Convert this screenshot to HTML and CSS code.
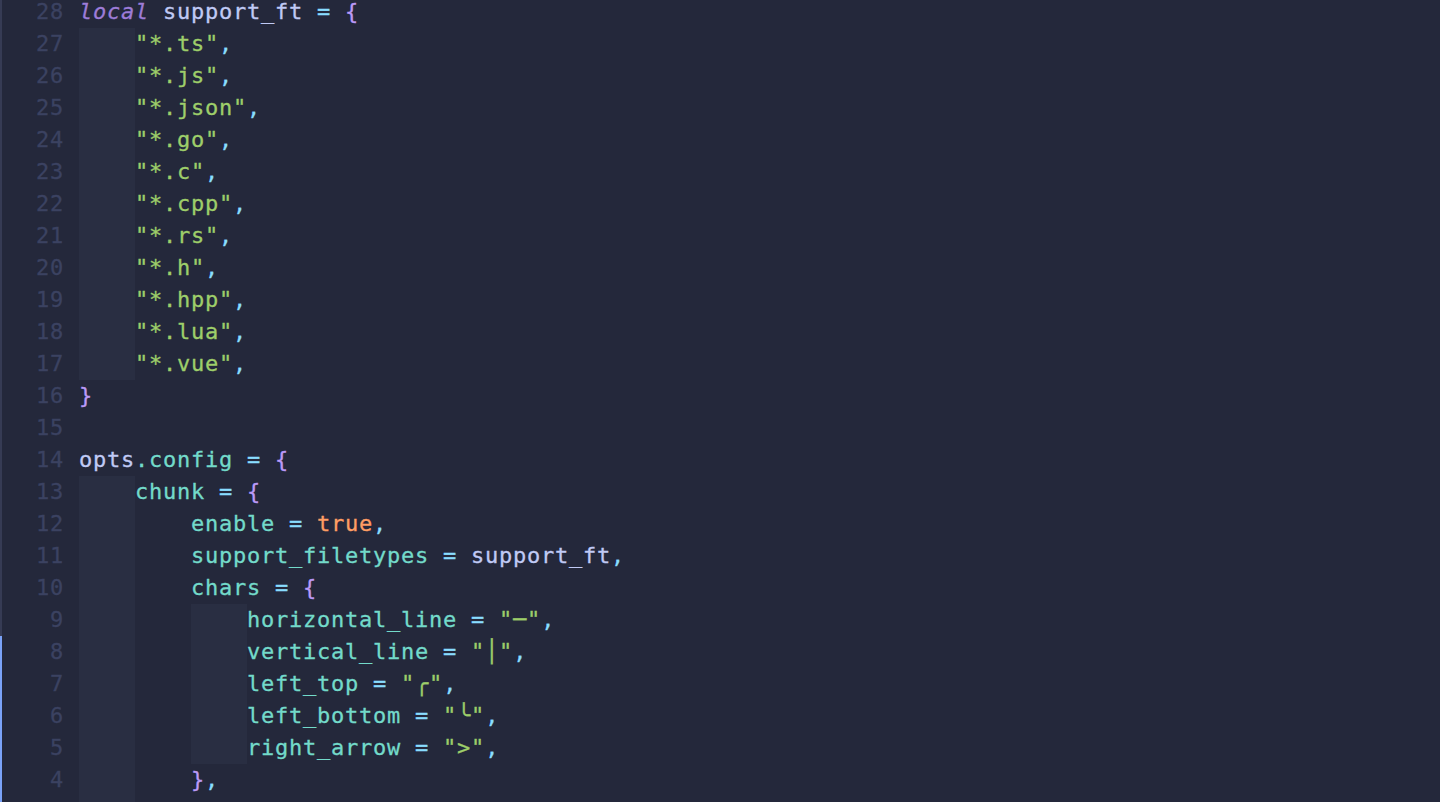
FILE: index.html
```html
<!DOCTYPE html>
<html lang="en">
<head>
<meta charset="utf-8">
<title>support_ft.lua</title>
<link rel="stylesheet" href="styles.css">
</head>
<body>
<div class="window">
  <div class="edge"></div>
  <div class="editor">
    <div class="row"><span class="ln">28</span><span class="code"><span class="kw">local</span> <span class="var">support_ft</span> <span class="op">=</span> <span class="br">{</span></span></div>
    <div class="row"><span class="ln">27</span><span class="code"><span class="ind g">    </span><span class="str">"*.ts"</span><span class="pun">,</span></span></div>
    <div class="row"><span class="ln">26</span><span class="code"><span class="ind g">    </span><span class="str">"*.js"</span><span class="pun">,</span></span></div>
    <div class="row"><span class="ln">25</span><span class="code"><span class="ind g">    </span><span class="str">"*.json"</span><span class="pun">,</span></span></div>
    <div class="row"><span class="ln">24</span><span class="code"><span class="ind g">    </span><span class="str">"*.go"</span><span class="pun">,</span></span></div>
    <div class="row"><span class="ln">23</span><span class="code"><span class="ind g">    </span><span class="str">"*.c"</span><span class="pun">,</span></span></div>
    <div class="row"><span class="ln">22</span><span class="code"><span class="ind g">    </span><span class="str">"*.cpp"</span><span class="pun">,</span></span></div>
    <div class="row"><span class="ln">21</span><span class="code"><span class="ind g">    </span><span class="str">"*.rs"</span><span class="pun">,</span></span></div>
    <div class="row"><span class="ln">20</span><span class="code"><span class="ind g">    </span><span class="str">"*.h"</span><span class="pun">,</span></span></div>
    <div class="row"><span class="ln">19</span><span class="code"><span class="ind g">    </span><span class="str">"*.hpp"</span><span class="pun">,</span></span></div>
    <div class="row"><span class="ln">18</span><span class="code"><span class="ind g">    </span><span class="str">"*.lua"</span><span class="pun">,</span></span></div>
    <div class="row"><span class="ln">17</span><span class="code"><span class="ind g">    </span><span class="str">"*.vue"</span><span class="pun">,</span></span></div>
    <div class="row"><span class="ln">16</span><span class="code"><span class="br">}</span></span></div>
    <div class="row"><span class="ln">15</span><span class="code"></span></div>
    <div class="row"><span class="ln">14</span><span class="code"><span class="var">opts</span><span class="key">.config</span> <span class="op">=</span> <span class="br">{</span></span></div>
    <div class="row"><span class="ln">13</span><span class="code"><span class="ind g">    </span><span class="key">chunk</span> <span class="op">=</span> <span class="br">{</span></span></div>
    <div class="row"><span class="ln">12</span><span class="code"><span class="ind g">    </span><span class="ind">    </span><span class="key">enable</span> <span class="op">=</span> <span class="bool">true</span><span class="pun">,</span></span></div>
    <div class="row"><span class="ln">11</span><span class="code"><span class="ind g">    </span><span class="ind">    </span><span class="key">support_filetypes</span> <span class="op">=</span> <span class="var">support_ft</span><span class="pun">,</span></span></div>
    <div class="row"><span class="ln">10</span><span class="code"><span class="ind g">    </span><span class="ind">    </span><span class="key">chars</span> <span class="op">=</span> <span class="br">{</span></span></div>
    <div class="row"><span class="ln">9</span><span class="code"><span class="ind g">    </span><span class="ind">    </span><span class="ind g">    </span><span class="key">horizontal_line</span> <span class="op">=</span> <span class="str">"─"</span><span class="pun">,</span></span></div>
    <div class="row"><span class="ln">8</span><span class="code"><span class="ind g">    </span><span class="ind">    </span><span class="ind g">    </span><span class="key">vertical_line</span> <span class="op">=</span> <span class="str">"│"</span><span class="pun">,</span></span></div>
    <div class="row"><span class="ln">7</span><span class="code"><span class="ind g">    </span><span class="ind">    </span><span class="ind g">    </span><span class="key">left_top</span> <span class="op">=</span> <span class="str">"╭"</span><span class="pun">,</span></span></div>
    <div class="row"><span class="ln">6</span><span class="code"><span class="ind g">    </span><span class="ind">    </span><span class="ind g">    </span><span class="key">left_bottom</span> <span class="op">=</span> <span class="str">"╰"</span><span class="pun">,</span></span></div>
    <div class="row"><span class="ln">5</span><span class="code"><span class="ind g">    </span><span class="ind">    </span><span class="ind g">    </span><span class="key">right_arrow</span> <span class="op">=</span> <span class="str">"&gt;"</span><span class="pun">,</span></span></div>
    <div class="row"><span class="ln">4</span><span class="code"><span class="ind g">    </span><span class="ind">    </span><span class="br">}</span><span class="pun">,</span></span></div>
    <div class="row"><span class="ln">3</span><span class="code"><span class="ind g">    </span><span class="ind">    </span><span class="key">style</span> <span class="op">=</span> <span class="br">{</span></span></div>
  </div>
</div>
</body>
</html>
```

FILE: styles.css
```css
html, body {
  margin: 0;
  padding: 0;
  height: 100%;
  overflow: hidden;
  background: #24283b;
}

.window {
  display: flex;
  height: 802px;
  background: #24283b;
}

.edge {
  width: 2px;
  flex: 0 0 2px;
  background: linear-gradient(to bottom, #363b54 0, #363b54 636px, #7aa2f7 636px, #7aa2f7 100%);
}

.editor {
  flex: 1;
  margin-top: -4px;
  font-family: "DejaVu Sans Mono", "Liberation Mono", monospace;
  font-size: 22px;
  letter-spacing: 0.755px;
  line-height: 32px;
  color: #c0caf5;
  -webkit-text-stroke: 0.3px currentColor;
}

.row {
  display: grid;
  grid-template-columns: 62px 1fr;
  column-gap: 15px;
  height: 32px;
  white-space: pre;
}

.ln {
  text-align: right;
  color: #3b4261;
}

.code {
  display: block;
  white-space: pre;
}

.ind {
  display: inline-block;
  height: 32px;
  vertical-align: top;
}

.ind.g {
  background: #292e42;
}

.kw {
  color: #9d7cd8;
  font-style: italic;
}

.var {
  color: #c0caf5;
}

.op,
.pun {
  color: #89ddff;
}

.br {
  color: #bb9af7;
}

.str {
  color: #9ece6a;
}

.key {
  color: #73daca;
}

.bool {
  color: #ff9e64;
}
```
